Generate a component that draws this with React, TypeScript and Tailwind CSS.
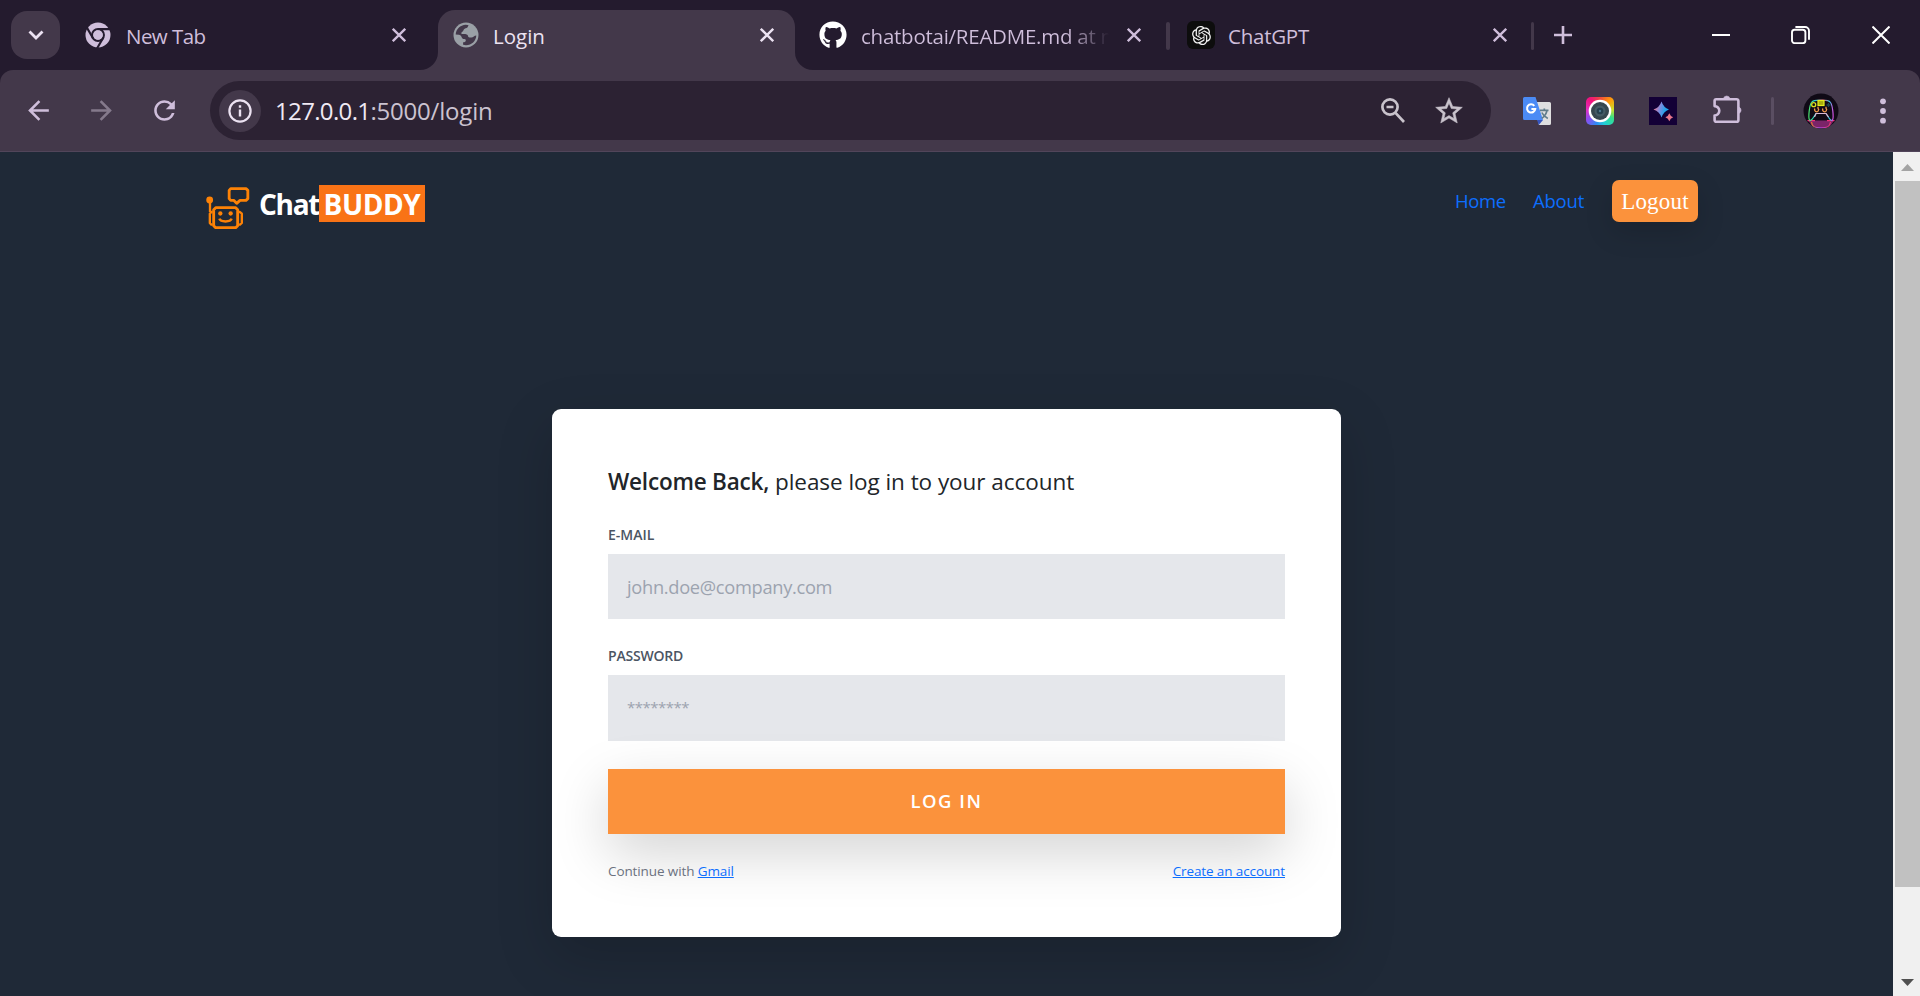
import type { ReactNode } from "react";
import { FaGithub } from "react-icons/fa";
import { RiOpenaiFill } from "react-icons/ri";
import { MdArrowBack, MdArrowForward, MdRefresh, MdStarOutline } from "react-icons/md";

function CloseIcon({ className }: { className: string }) {
  return (
    <svg viewBox="0 0 14 14" className={`size-[14px] ${className}`} stroke="currentColor" strokeWidth="2.3" fill="none">
      <path d="M0.8 0.8 13.2 13.2M13.2 0.8 0.8 13.2" />
    </svg>
  );
}

function ChromeIcon() {
  return (
    <svg viewBox="0 0 26 26" className="size-[26px]">
      <circle cx="13" cy="13" r="12.5" fill="#cfbedb" />
      <circle cx="13" cy="13" r="5.9" fill="none" stroke="#241b2e" strokeWidth="2.1" />
      <g stroke="#241b2e" strokeWidth="2.1">
        <path d="M13 7.1H25.5M7.9 16 1.6 5.1M18.1 16 11.8 26.8" />
      </g>
      <circle cx="13" cy="13" r="4.7" fill="#cfbedb" />
    </svg>
  );
}

function GlobeIcon() {
  return (
    <svg viewBox="0 0 26 26" className="size-[26px]">
      <circle cx="13" cy="13" r="12.5" fill="#9aa0a6" />
      <path
        d="M2.700 12.600C2.900 7.400 7.200 3 12.800 2.800 14 2.800 14.900 3 15.600 3.200 14.800 4.200 15 5.400 13.600 6 12.200 6.600 11 6.600 10.500 8.200 10.200 9.600 8.600 9.600 8.300 11 8.200 11.900 9 12.100 10.200 12.100 13.400 12.100 14.800 12.600 15.100 14.200 15.400 15.600 16.800 15.700 18.300 15.500 20.300 15.200 21.300 13.600 23.300 13.400 23 18.800 18.700 23.200 13 23.200 12 23.200 11 23.100 10.100 22.800V20.300C11.800 20.300 12.800 19.600 12.800 18.200 12.800 17 11.700 16.900 10.400 16.900 8.600 16.900 8.800 12.800 5.900 12.700Z"
        fill="#43384a"
      />
    </svg>
  );
}

function Title({ children, className }: { children: ReactNode; className: string }) {
  return <span className={`relative top-px text-[20.5px] leading-[30px] whitespace-nowrap ${className}`}>{children}</span>;
}

function TabStrip() {
  return (
    <div className="flex h-[70px] items-start pl-[11px]">
      <button className="mt-[11px] flex h-12 w-[49px] items-center justify-center rounded-[16px] bg-[#43384a]">
        <svg viewBox="0 0 16 10" className="mb-px h-[10px] w-4" fill="none" stroke="#ece2f2" strokeWidth="2.8">
          <path d="M1.5 1.5 8 8 14.5 1.5" />
        </svg>
      </button>
      <div className="flex h-[70px] w-[378px] items-center pl-[25px]">
        <ChromeIcon />
        <Title className="ml-[15px] flex-1 tracking-[-0.55px] text-[#cfbedb]">New Tab</Title>
        <CloseIcon className="mr-[32px] text-[#cfbedb]" />
      </div>
      <div className="relative mt-[10px] flex h-[60px] w-[357px] items-center rounded-t-[17px] bg-[#43384a] pb-[10px] pl-[15px]">
        <span className="absolute bottom-0 -left-[18px] size-[18px] bg-[#43384a]">
          <span className="block size-[18px] rounded-br-[18px] bg-[#241b2e]" />
        </span>
        <span className="absolute -right-[18px] bottom-0 size-[18px] bg-[#43384a]">
          <span className="block size-[18px] rounded-bl-[18px] bg-[#241b2e]" />
        </span>
        <GlobeIcon />
        <Title className="ml-[14px] flex-1 text-[#ece2f2]">Login</Title>
        <CloseIcon className="mr-[21.500px] text-[#ece2f2]" />
      </div>
      <div className="flex h-[70px] w-[371px] items-center pl-[24px]">
        <FaGithub className="size-[28px] text-white" />
        <Title className="ml-[14px] w-[264px] bg-linear-to-r from-[#cfbedb] from-78% to-transparent to-94% bg-clip-text tracking-[-0.250px] text-transparent">
          chatbotai/README.md at m
        </Title>
        <CloseIcon className="ml-[2px] text-[#cfbedb]" />
      </div>
      <div className="mt-[22px] h-7 w-1 rounded-full bg-[#43384a]" />
      <div className="flex h-[70px] w-[361px] items-center pl-[17px]">
        <span className="flex size-7 items-center justify-center rounded-[6px] bg-[#0d0d0d]">
          <RiOpenaiFill className="size-[23px] text-[#f2f2f2]" />
        </span>
        <Title className="ml-[13px] flex-1 tracking-[-0.250px] text-[#cfbedb]">ChatGPT</Title>
        <CloseIcon className="mr-[24px] text-[#cfbedb]" />
      </div>
      <div className="mt-[22px] h-7 w-[3px] rounded-full bg-[#43384a]" />
      <svg viewBox="0 0 18 18" className="mt-[26px] ml-[19.500px] size-[18px]" stroke="#cfbedb" strokeWidth="2.6">
        <path d="M9 0V18M0 9H18" />
      </svg>
      <div className="mt-[26px] ml-auto flex items-center pr-[30px] text-white">
        <svg viewBox="0 0 18 18" className="size-[18px]" stroke="currentColor" strokeWidth="2">
          <path d="M0 9H18" />
        </svg>
        <svg viewBox="0 0 19 18" className="ml-[61px] h-[18px] w-[19px]" fill="none" stroke="currentColor" strokeWidth="1.9">
          <rect x="1" y="3.7" width="13.4" height="13.4" rx="2.6" />
          <path d="M4.4 1H14a4 4 0 0 1 4 4V13.8" />
        </svg>
        <svg viewBox="0 0 18 18" className="ml-[62px] size-[18px]" stroke="currentColor" strokeWidth="2">
          <path d="M0.5 0.5 17.5 17.5M17.5 0.5 0.5 17.5" />
        </svg>
      </div>
    </div>
  );
}

function TranslateIcon() {
  return (
    <svg viewBox="0 0 28 28" className="size-7">
      <path d="M10 5H26.5A1.6 1.6 0 0 1 28 6.600V26.400A1.600 1.600 0 0 1 26.400 28H16Z" fill="#dfdfe0" />
      <path d="M14 23H20L15.800 28Z" fill="#3555c0" />
      <path d="M1.500 0H12.500L20 23H1.500A1.500 1.500 0 0 1 0 21.500V1.500A1.500 1.500 0 0 1 1.500 0Z" fill="#4b8bf5" />
      <path d="M11.300 8.800A4.100 4.100 0 1 0 12.200 12H8.400" fill="none" stroke="#fff" strokeWidth="2.100" />
      <path d="M17 13.300H25.500M21.300 11.500V13.300M24 13.300C23.300 17 21 19.800 18.800 21.400M18.800 15.500C20 18 22.500 20.300 24.800 21.500" fill="none" stroke="#607d8b" strokeWidth="1.700" />
    </svg>
  );
}

function LensIcon() {
  return (
    <div className="flex size-7 items-center justify-center rounded-[5px] bg-[conic-gradient(from_0deg,#f0483e,#ff9d0a_45deg,#c6e22c_85deg,#35e08a_120deg,#22cfd8_160deg,#2d8cf5_195deg,#8b4df0_235deg,#e22fc4_275deg,#f0127c_320deg,#f0483e)]">
      <svg viewBox="0 0 24 24" className="size-6">
        <circle cx="12" cy="12" r="11.300" fill="#fff" />
        <circle cx="12" cy="12" r="9" fill="#37474f" />
        <circle cx="12" cy="12" r="5.500" fill="#455a64" />
        <circle cx="12" cy="12" r="3.300" fill="#263f4d" />
        <circle cx="12" cy="12" r="1.200" fill="#4e7a90" />
      </svg>
    </div>
  );
}

function SparkleIcon() {
  return (
    <svg viewBox="0 0 28 28" className="size-7">
      <defs>
        <linearGradient id="spark" x1="0" y1="0" x2="1" y2="0.300">
          <stop offset="0.100" stopColor="#f0788c" />
          <stop offset="0.500" stopColor="#7c8be0" />
          <stop offset="0.850" stopColor="#1fa3ea" />
        </linearGradient>
      </defs>
      <rect width="28" height="28" fill="#130036" />
      <path d="M12.500 4.500Q14.500 10.500 20 12.500 14.500 14.500 12.500 20.500 10.500 14.500 4.500 12.500 10.500 10.500 12.500 4.500Z" fill="url(#spark)" />
      <path d="M20.300 16.300Q21.300 19.300 24.200 20.300 21.300 21.300 20.300 24.300 19.300 21.300 16.400 20.300 19.300 19.300 20.300 16.300Z" fill="#e8778a" />
    </svg>
  );
}

function PuzzleIcon() {
  return (
    <svg viewBox="0 0 30 30" className="h-[30px] w-[30px]" fill="none" stroke="#cfbedb" strokeWidth="2.600" strokeLinejoin="round">
      <path d="M3.200 5.200H23.600A1.800 1.800 0 0 1 25.400 7V26A1.800 1.800 0 0 1 23.600 27.800H3.200A1.600 1.600 0 0 1 1.600 26.200V21.500A4.700 4.700 0 0 0 1.600 12.100V6.800A1.600 1.600 0 0 1 3.200 5.200Z" />
      <path d="M10.400 4.600A3.400 3.400 0 0 1 17 4.600ZM25.800 13A3.400 3.400 0 0 1 25.800 19.400Z" fill="#cfbedb" strokeWidth="0.600" />
    </svg>
  );
}

function Avatar() {
  return (
    <svg viewBox="0 0 36 36" className="size-9">
      <defs>
        <linearGradient id="pad" x1="0" y1="0" x2="1" y2="0">
          <stop offset="0" stopColor="#4be36c" />
          <stop offset="0.250" stopColor="#27d3d8" />
          <stop offset="0.600" stopColor="#e8508c" />
          <stop offset="0.850" stopColor="#2fd0e6" />
          <stop offset="1" stopColor="#d94ae0" />
        </linearGradient>
        <linearGradient id="glow" x1="0" y1="0" x2="1" y2="0">
          <stop offset="0" stopColor="#e07a2a" />
          <stop offset="0.400" stopColor="#a044e0" />
          <stop offset="1" stopColor="#f0356a" />
        </linearGradient>
        <clipPath id="disc">
          <circle cx="18" cy="18" r="17.500" />
        </clipPath>
      </defs>
      <circle cx="18" cy="18" r="17.500" fill="#100a16" />
      <g clipPath="url(#disc)" fill="none">
        <path d="M5 27.500H31L28 32C27 34.500 25 35.300 18 35.300S9.500 34.500 8.500 32Z" fill="#7a2468" />
        <path d="M4.500 27.600H12M24 27.600H31.500" stroke="#f0307a" strokeWidth="1.200" />
        <path d="M8.500 29C9.500 34.500 12 34.800 18 34.800S26.500 34.500 27.500 29" stroke="url(#glow)" strokeWidth="1.200" />
        <path d="M6.500 27C5 24 6.500 12 8.500 9.500 10 7 12.500 7.200 18 7.200S26 7 27.500 9.500C29.500 12 31 24 29.500 27 28 28.500 25.500 24.500 23 20.500H13C10.500 24.500 8 28.500 6.500 27Z" stroke="url(#pad)" strokeWidth="1.200" />
        <path d="M11.500 24 13 20.500H23L25.500 24" stroke="#d9b8d4" strokeWidth="1.200" />
        <rect x="15" y="7.500" width="6" height="5" fill="#a8ad10" stroke="#e5ee1e" strokeWidth="1.200" />
        <circle cx="10.700" cy="11.700" r="2" stroke="#d8e020" strokeWidth="1.300" />
        <path d="M23.500 12h4M25.500 10v4" stroke="#1d4550" strokeWidth="1.300" />
        <path d="M12 15.500A2 2 0 1 0 15 15.300V13.800M20 15.500A2 2 0 1 0 23 15.300V13.800" stroke="#f2994a" strokeWidth="1.300" />
      </g>
    </svg>
  );
}

function Toolbar() {
  return (
    <div className="bg-[#241b2e]">
      <div className="flex h-[82px] items-center rounded-t-[13px] border-b border-[#51455a] bg-[#43384a] pl-[23px]">
        <MdArrowBack className="size-[31px] shrink-0 text-[#cfbedb]" />
        <MdArrowForward className="ml-[32px] size-[31px] shrink-0 text-[#857a8c]" />
        <MdRefresh className="ml-[32px] size-[31px] shrink-0 text-[#cfbedb]" />
        <div className="ml-[30px] flex h-[59px] w-[1281px] shrink-0 items-center rounded-full bg-[#2c2233] pl-[9px] text-[24px]">
          <span className="flex size-[42px] items-center justify-center rounded-full bg-[#43384a]">
            <svg viewBox="0 0 24 24" className="size-6" fill="none" stroke="#ece2f2" strokeWidth="2.200">
              <circle cx="12" cy="12" r="10.600" />
              <path d="M12 10.500V17.500M12 6.300V8.700" strokeWidth="2.400" />
            </svg>
          </span>
          <span className="ml-[14px] tracking-[-0.65px] text-[#efe9f3]">127.0.0.1</span>
          <span className="tracking-[-0.2px] text-[#cbc3d0]">:5000/login</span>
          <svg viewBox="0 0 24 25" className="ml-auto h-[25px] w-6" fill="none" stroke="#c9c3cc" strokeWidth="2.700">
            <circle cx="9" cy="9" r="7.600" />
            <path d="M14.500 14.800 23 24M5.500 9H12.500" />
          </svg>
          <MdStarOutline className="mr-[26px] ml-[28px] size-[32px] stroke-[#c9c3cc] text-[#c9c3cc]" strokeWidth="0.4" />
        </div>
        <div className="ml-[32px] flex shrink-0 items-center">
          <TranslateIcon />
          <span className="ml-[35px]"><LensIcon /></span>
          <span className="ml-[35px]"><SparkleIcon /></span>
          <span className="mb-[4px] ml-[36px]"><PuzzleIcon /></span>
          <span className="ml-[28px] h-7 w-[3px] rounded-full bg-[#5a4e62]" />
          <span className="ml-[29px]"><Avatar /></span>
          <svg viewBox="0 0 6 26" className="ml-[41px] h-[26px] w-[6px]" fill="#cfbedb">
            <circle cx="3" cy="3.300" r="2.900" />
            <circle cx="3" cy="13" r="2.900" />
            <circle cx="3" cy="22.700" r="2.900" />
          </svg>
        </div>
      </div>
    </div>
  );
}

function RobotLogo() {
  return (
    <svg viewBox="45 78 135 132" className="h-11 w-[45px]" fill="none" stroke="#fd8206" strokeWidth="8.500" strokeLinejoin="round">
      <circle cx="59" cy="120" r="6" fill="#fd8206" />
      <path d="M60 122V156" strokeWidth="7" />
      <path d="M77 143H137L143 149V197L137 203H77L71 197V149Z" />
      <path d="M68 156H64L59.500 161V189L64 194H68M146 156H150L155.500 161V189L150 194H146" strokeWidth="7" />
      <circle cx="91" cy="160.500" r="6.500" fill="#fd8206" stroke="none" />
      <circle cx="122" cy="160.500" r="6.500" fill="#fd8206" stroke="none" />
      <path d="M88 176C92 187 121 187 125 176" strokeWidth="7.500" />
      <path d="M122 86H168L173.500 91V116L168 121H150L140 130 131 121H122L117.500 116V91Z" />
    </svg>
  );
}

function SiteHeader() {
  return (
    <header className="flex h-[98px] items-center pr-[195px] pl-[205px]">
      <div className="mt-[13px] flex items-center">
        <RobotLogo />
        <span className="mb-[9px] ml-[8px] flex h-[37px] items-center text-[28px] leading-[35px] font-bold text-white">
          <span className="w-[61px] pt-[2px] pl-px tracking-[-1.3px]">Chat</span>
          <span className="w-[106px] bg-[#f97316] pt-[2px] pl-[4.500px] tracking-[-0.4px]">BUDDY</span>
        </span>
      </div>
      <nav className="ml-auto flex items-center text-[18.5px] leading-[28px] text-[#0d6efd]">
        <a className="w-[78px] tracking-[-0.4px]">Home</a>
        <a className="w-[79px] tracking-[-0.2px]">About</a>
        <a className="flex h-[42px] w-[86px] items-center justify-center rounded-[7px] bg-[#fb923c] pt-[2px] font-['Liberation_Serif',serif] text-[23px] tracking-[0.200px] text-white shadow-[0_10px_28px_rgba(0,0,0,0.15)]">
          Logout
        </a>
      </nav>
    </header>
  );
}

function LoginCard() {
  return (
    <form className="mx-auto mt-[159px] h-[528px] w-[789px] rounded-[9px] bg-white px-[56px] pt-[56px] text-[#212529] shadow-[0_19px_56px_rgba(0,0,0,0.175)]">
      <h1 className="text-[22.500px] leading-[33px] tracking-[-0.050px]">
        <span className="font-semibold tracking-[-0.200px]">Welcome Back,</span> please log in to your account
      </h1>
      <label className="mt-[26px] block text-[14px] leading-[21px] font-semibold text-[#4b5563]">E-MAIL</label>
      <div className="mt-[9px] flex h-[65px] items-center bg-[#e5e7eb] pt-px pl-[19px] text-[18.250px] tracking-[-0.300px] text-[#9ca3af]">john.doe@company.com</div>
      <label className="mt-[26px] block text-[14px] leading-[21px] font-semibold tracking-[-0.200px] text-[#4b5563]">PASSWORD</label>
      <div className="mt-[9px] flex h-[66px] items-center bg-[#e5e7eb] pb-[2px] pl-[19px] text-[15px] tracking-[-0.520px] text-[#9ca3af]">********</div>
      <button className="mt-[28px] flex h-[65px] w-full items-center justify-center bg-[#fb923c] pb-[2px] text-[18.500px] font-semibold tracking-[1.500px] text-white shadow-[0_19px_56px_rgba(0,0,0,0.175)]">
        LOG IN
      </button>
      <div className="mt-[27px] flex justify-between text-[13.500px] leading-[20px] tracking-[-0.110px] text-[#6b7280]">
        <span>
          Continue with <a className="text-[#0d6efd] underline">Gmail</a>
        </span>
        <a className="text-[#0d6efd] underline">Create an account</a>
      </div>
    </form>
  );
}

function Scrollbar() {
  return (
    <div className="flex h-full w-[27px] flex-col items-center bg-[#f0f0f0] pl-[2px]">
      <svg viewBox="0 0 13 7" className="mt-[12px] h-[7px] w-[13px]" fill="#a3a3a3">
        <path d="M0 7 6.500 0 13 7Z" />
      </svg>
      <div className="mt-[10px] h-[706px] w-full bg-[#c1c1c1]" />
      <svg viewBox="0 0 13 7" className="mt-auto mb-[10px] h-[7px] w-[13px]" fill="#505050">
        <path d="M0 0H13L6.500 7Z" />
      </svg>
    </div>
  );
}

export default function App() {
  return (
    <div className="flex h-[996px] w-[1920px] flex-col overflow-hidden bg-[#241b2e] font-['Open_Sans','Noto_Sans',sans-serif]">
      <TabStrip />
      <Toolbar />
      <div className="flex min-h-0 flex-1 bg-[#1f2937]">
        <main className="h-full flex-1 overflow-hidden">
          <SiteHeader />
          <LoginCard />
        </main>
        <Scrollbar />
      </div>
    </div>
  );
}
